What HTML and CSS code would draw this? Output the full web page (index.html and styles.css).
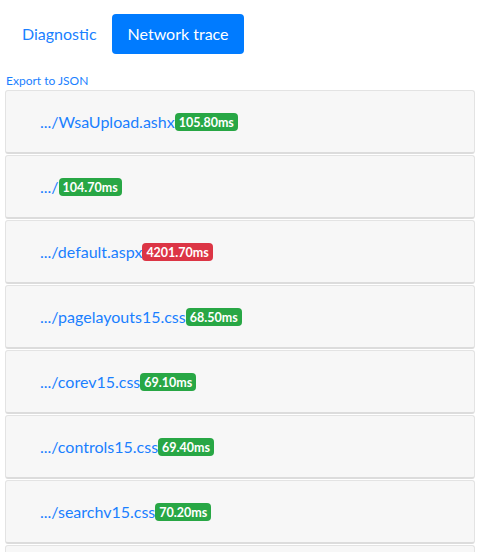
FILE: index.html
```html
<!DOCTYPE html>
<html>
<head>
<meta charset="utf-8">
<link rel="stylesheet" href="styles.css">
</head>
<body>
<div class="app">
  <nav class="pills">
    <a class="pill">Diagnostic</a>
    <a class="pill active">Network trace</a>
  </nav>
  <a class="export">Export to JSON</a>
  <div class="list">
    <div class="card"><a class="url">.../WsaUpload.ashx</a><span class="badge ok">105.80ms</span></div>
    <div class="card"><a class="url">.../</a><span class="badge ok">104.70ms</span></div>
    <div class="card"><a class="url">.../default.aspx</a><span class="badge bad">4201.70ms</span></div>
    <div class="card"><a class="url">.../pagelayouts15.css</a><span class="badge ok">68.50ms</span></div>
    <div class="card"><a class="url">.../corev15.css</a><span class="badge ok">69.10ms</span></div>
    <div class="card"><a class="url">.../controls15.css</a><span class="badge ok">69.40ms</span></div>
    <div class="card"><a class="url">.../searchv15.css</a><span class="badge ok">70.20ms</span></div>
    <div class="card"></div>
  </div>
</div>
</body>
</html>
```

FILE: styles.css
```css
html, body {
  margin: 0;
  padding: 0;
  background: #fff;
  overflow: hidden;
}
body {
  font-family: Lato, "Open Sans", sans-serif;
  color: #212529;
}
.app {
  padding: 14px 9px 0 5px;
}
.pills {
  display: flex;
  padding-left: 1px;
}
.pill {
  display: block;
  padding: 8px 15px 8px 16px;
  font-size: 16px;
  line-height: 24px;
  color: #1a7fff;
  border-radius: 4px;
}
.pill.active {
  background: #007bff;
  color: #fff;
}
.export {
  display: block;
  margin-top: 19px;
  padding-left: 1px;
  font-size: 12px;
  line-height: 16px;
  color: #1a7fff;
}
.list {
  display: flex;
  flex-direction: column;
  gap: 1px;
  margin-top: 1px;
}
.card {
  display: flex;
  align-items: center;
  padding-left: 34px;
  background: #f7f7f7;
  border: 1px solid #e3e3e3;
  border-bottom: 2px solid #dcdcdc;
  border-radius: 3px;
  box-sizing: border-box;
  height: 64px;
  flex: none;
}
.url {
  font-size: 16px;
  color: #1a7fff;
}
.badge {
  display: inline-block;
  padding: 3px 4px 2px;
  font-size: 12.5px;
  font-weight: 700;
  line-height: 13px;
  color: #fff;
  border-radius: 4px;
}
.badge.ok { background: #28a745; }
.badge.bad { background: #dc3545; }
```
